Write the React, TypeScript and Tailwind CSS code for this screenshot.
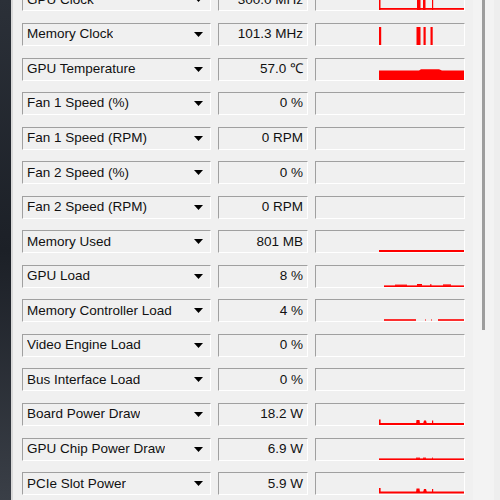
import React from "react";

type Sensor = {
  name: string;
  value: string;
  graph?: React.ReactNode;
};

const RED = "#ff0000";

// graph inner area is 148 x 21 (border excluded), plotted history starts at x=63
const sensors: Sensor[] = [
  {
    name: "GPU Clock",
    value: "300.0 MHz",
    graph: (
      <>
        <rect x="63" y="19" width="85" height="1.8" fill={RED} />
        <rect x="63" y="1" width="1.5" height="20" fill={RED} />
        <rect x="101" y="1" width="3.5" height="20" fill={RED} />
        <rect x="107" y="1" width="2.5" height="20" fill={RED} />
        <rect x="116" y="1" width="1.2" height="20" fill={RED} />
      </>
    ),
  },
  {
    name: "Memory Clock",
    value: "101.3 MHz",
    graph: (
      <>
        <rect x="63" y="3" width="2.2" height="18" fill={RED} />
        <rect x="100.5" y="3" width="4" height="18" fill={RED} />
        <rect x="107.5" y="3" width="2.2" height="18" fill={RED} />
        <rect x="114.5" y="3" width="2.2" height="18" fill={RED} />
      </>
    ),
  },
  {
    name: "GPU Temperature",
    value: "57.0 \u2103",
    graph: (
      <path
        d="M63 11.5 L103 11.5 L105 10.2 L123 10.2 L126 11.5 L148 11.5 L148 21 L63 21 Z"
        fill={RED}
      />
    ),
  },
  { name: "Fan 1 Speed (%)", value: "0 %" },
  { name: "Fan 1 Speed (RPM)", value: "0 RPM" },
  { name: "Fan 2 Speed (%)", value: "0 %" },
  { name: "Fan 2 Speed (RPM)", value: "0 RPM" },
  {
    name: "Memory Used",
    value: "801 MB",
    graph: <rect x="63" y="19" width="85" height="2" fill={RED} />,
  },
  {
    name: "GPU Load",
    value: "8 %",
    graph: (
      <>
        <rect x="68" y="19.4" width="80" height="1.6" fill={RED} />
        <rect x="79" y="18.6" width="12" height="1.2" fill={RED} />
        <rect x="101" y="18" width="5" height="1.8" fill={RED} />
        <rect x="114" y="18.3" width="1.5" height="1.5" fill={RED} />
        <rect x="127" y="18.4" width="8" height="1.4" fill={RED} />
      </>
    ),
  },
  {
    name: "Memory Controller Load",
    value: "4 %",
    graph: (
      <>
        <rect x="68" y="19.2" width="32" height="1.6" fill={RED} />
        <rect x="109" y="19.5" width="1" height="1" fill={RED} />
        <rect x="115" y="19.5" width="1" height="1" fill={RED} />
        <rect x="122" y="19.2" width="26" height="1.6" fill={RED} />
      </>
    ),
  },
  { name: "Video Engine Load", value: "0 %" },
  { name: "Bus Interface Load", value: "0 %" },
  {
    name: "Board Power Draw",
    value: "18.2 W",
    graph: (
      <>
        <rect x="63" y="19" width="85" height="2" fill={RED} />
        <rect x="63" y="15.5" width="1.6" height="5" fill={RED} />
        <path d="M100 20 L100.5 16 L103.5 16 L104 20 Z" fill={RED} />
        <path d="M107 20 L108 16.5 L110 16.5 L111 20 Z" fill={RED} />
        <rect x="116" y="16.5" width="1.2" height="4" fill={RED} />
      </>
    ),
  },
  {
    name: "GPU Chip Power Draw",
    value: "6.9 W",
    graph: (
      <>
        <rect x="63" y="19.4" width="85" height="1.6" fill={RED} />
        <rect x="100" y="18.6" width="4" height="1.2" fill={RED} />
        <rect x="107" y="18.6" width="3" height="1.2" fill={RED} />
        <rect x="116" y="18.6" width="1" height="1.2" fill={RED} />
      </>
    ),
  },
  {
    name: "PCIe Slot Power",
    value: "5.9 W",
    graph: (
      <>
        <rect x="63" y="18.5" width="85" height="2" fill={RED} />
        <rect x="63" y="15" width="1.6" height="5" fill={RED} />
        <path d="M100 19.5 L100.5 15.5 L103.5 15.5 L104 19.5 Z" fill={RED} />
        <path d="M107 19.5 L108 16 L110 16 L111 19.5 Z" fill={RED} />
        <rect x="116" y="16" width="1.2" height="4" fill={RED} />
      </>
    ),
  },
];

function Arrow() {
  return (
    <svg width="9" height="5" viewBox="0 0 9 5" className="shrink-0">
      <path d="M0 0 L9 0 L4.5 5 Z" fill="#000000" />
    </svg>
  );
}

const sunken =
  "h-[23px] border-t border-l border-b border-r border-t-[#a0a0a0] border-l-[#a0a0a0] border-b-white border-r-white bg-[#f0f0f0]";

function SensorRow({ sensor }: { sensor: Sensor }) {
  return (
    <div className="flex items-center h-[34.55px] shrink-0">
      <div className={`${sunken} w-[189px] flex items-center justify-between pl-[4px] pr-[7px]`}>
        <span className="truncate">{sensor.name}</span>
        <Arrow />
      </div>
      <div className={`${sunken} ml-[7px] w-[90px] flex items-center justify-end pr-[4px]`}>
        <span>{sensor.value}</span>
      </div>
      <div className={`${sunken} ml-[7px] w-[150px] overflow-hidden`}>
        <svg width="148" height="21" viewBox="0 0 148 21" className="block">
          {sensor.graph}
        </svg>
      </div>
    </div>
  );
}

export default function App() {
  return (
    <div
      className="w-[500px] h-[500px] overflow-hidden flex bg-[#f0f0f0] text-[13.5px] text-[#111111]"
      style={{ fontFamily: '"Liberation Sans", Arial, sans-serif' }}
    >
      {/* desktop peeking through at the left */}
      <div className="w-[11px] shrink-0 bg-gradient-to-b from-[#2b3038] via-[#1c2027] to-[#3a3f47]" />
      <div className="w-[2px] shrink-0 bg-[#d9d9d9]" />

      <div className="flex-1 flex">
        <div className="pl-[9px] flex flex-col -mt-[17.3px]">
          {sensors.map((s) => (
            <SensorRow key={s.name} sensor={s} />
          ))}
        </div>

        {/* scroll strip */}
        <div className="ml-[8px] w-[21px] shrink-0 bg-[#f3f3f3] flex justify-center">
          <div className="w-[3px] h-[330px] bg-[#9d9d9d]" />
        </div>
        <div className="flex-1 bg-[#eeeeee]" />
      </div>
    </div>
  );
}
